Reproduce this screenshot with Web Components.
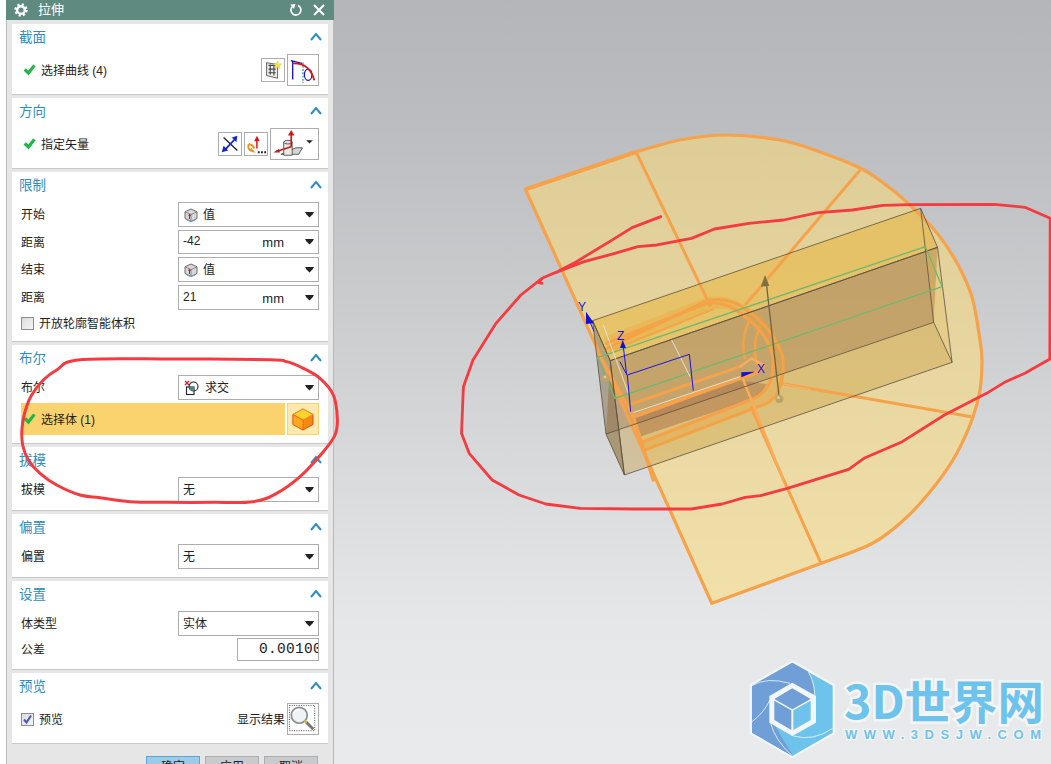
<!DOCTYPE html>
<html lang="zh"><head><meta charset="utf-8"><title>拉伸</title>
<style>
html,body{margin:0;padding:0;background:#fff}
body{font-family:"Liberation Sans","Noto Sans CJK SC",sans-serif;font-size:12px;color:#222}
</style></head><body>
<nx-app>
  <nx-dialog heading="拉伸">
    <nx-section heading="截面">
      <nx-row><nx-check-label>选择曲线 (4)</nx-check-label><nx-spacer></nx-spacer><nx-btn name="sketch" w="24" h="24"></nx-btn><nx-btn name="curve" w="32" h="32"></nx-btn></nx-row>
    </nx-section>
    <nx-section heading="方向">
      <nx-row><nx-check-label>指定矢量</nx-check-label><nx-spacer></nx-spacer><nx-btn name="reverse" w="24" h="24"></nx-btn><nx-btn name="infer" w="24" h="24"></nx-btn><nx-btn name="vector" w="49" h="32"></nx-btn></nx-row>
    </nx-section>
    <nx-section heading="限制">
      <nx-row label="开始"><nx-select icon="cube">值</nx-select></nx-row>
      <nx-row label="距离" h="24"><nx-select unit="mm" h="24">-42</nx-select></nx-row>
      <nx-row label="结束"><nx-select icon="cube">值</nx-select></nx-row>
      <nx-row label="距离"><nx-select unit="mm">21</nx-select></nx-row>
      <nx-row h="20"><nx-checkbox>开放轮廓智能体积</nx-checkbox></nx-row>
    </nx-section>
    <nx-section heading="布尔">
      <nx-row label="布尔"><nx-select icon="intersect">求交</nx-select></nx-row>
      <nx-selected-row>选择体 (1)</nx-selected-row>
    </nx-section>
    <nx-section heading="拔模">
      <nx-row label="拔模"><nx-select>无</nx-select></nx-row>
    </nx-section>
    <nx-section heading="偏置">
      <nx-row label="偏置"><nx-select>无</nx-select></nx-row>
    </nx-section>
    <nx-section heading="设置" gap="2">
      <nx-row label="体类型"><nx-select>实体</nx-select></nx-row>
      <nx-row label="公差" h="23"><nx-spacer></nx-spacer><nx-number>0.00100</nx-number></nx-row>
    </nx-section>
    <nx-section heading="预览">
      <nx-row><nx-checkbox checked>预览</nx-checkbox><nx-spacer></nx-spacer><span style="margin:0 0 2px 0">显示结果</span><nx-btn name="lens" w="32" h="32"></nx-btn></nx-row>
    </nx-section>
    <nx-button slot="footer" primary>确定</nx-button>
    <nx-button slot="footer">应用</nx-button>
    <nx-button slot="footer">取消</nx-button>
  </nx-dialog>
  <nx-viewport></nx-viewport>
  <nx-annotation slot="overlay"></nx-annotation>
</nx-app>
<script>
const ICONS={
sketch:`<svg viewBox="0 0 24 24" width="24" height="24"><path d="M5 4l12 2v15L5 18z" fill="#eee" stroke="#555"/><path d="M7 7h8M7 11h8M7 15h8M9 6v11M13 6v12" stroke="#444" stroke-width="1.2" fill="none"/><path d="M17 2l1.3 3.2 3.2.3-2.5 2 .8 3.2-2.8-1.8-2.8 1.8.8-3.2-2.5-2 3.2-.3z" fill="#f4e04d" stroke="#e8c840" stroke-width=".5"/></svg>`,
curve:`<svg viewBox="0 0 32 32" width="30" height="30"><path d="M5 6v20" stroke="#1212d8" stroke-width="1.4"/><path d="M3 6l12 3" stroke="#1212d8" stroke-width="1.4"/><path d="M16 8v22" stroke="#168a7c" stroke-width="1.2" stroke-dasharray="2 1.5"/><ellipse cx="21.5" cy="21" rx="4" ry="6" fill="none" stroke="#1212d8" stroke-width="1.3"/><path d="M5 9Q23 8 28 27" fill="none" stroke="#d81818" stroke-width="2"/></svg>`,
reverse:`<svg viewBox="0 0 24 24" width="24" height="24"><path d="M5 5l15 14" stroke="#222" stroke-width="1.5"/><path d="M6 19L18 6" stroke="#1428c8" stroke-width="2"/><path d="M20 3l-1 7-5-5zM3 21l2-7 5 5z" fill="#1428c8"/></svg>`,
infer:`<svg viewBox="0 0 24 24" width="24" height="24"><path d="M13 17V8" stroke="#d01818" stroke-width="1.6"/><path d="M13 3l3 6h-6z" fill="#d01818"/><path d="M4 12Q2 19 9 20L6 17M4 12q5 1 6 5" fill="none" stroke="#f09020" stroke-width="2"/><path d="M14 20h2v2h-2zM17.500 20h2v2h-2zM21 20h2v2h-2z" fill="#222"/></svg>`,
vector:`<svg viewBox="0 0 49 32" width="47" height="30"><path d="M10 27l16-7h7l-4 7z" fill="#d4d4d4" stroke="#333" stroke-width=".8"/><path d="M13 14h9v14h-9z" fill="#e8ebe0" stroke="#333" stroke-width=".8"/><ellipse cx="17.500" cy="14" rx="4.500" ry="2" fill="#dde" stroke="#333" stroke-width=".8"/><path d="M21 19V6" stroke="#d01818" stroke-width="1.800"/><path d="M21 1l3.500 6h-7z" fill="#d01818"/><path d="M21 19L5 24" stroke="#c02020" stroke-width="1.800"/><path d="M2 25l6-4 1 4z" fill="#c02020"/><path d="M37 12h7l-3.500 3.500z" fill="#222"/></svg>`,
lens:`<svg viewBox="0 0 32 32" width="30" height="30"><rect x="1.500" y="1.500" width="27" height="27" fill="none" stroke="#333" stroke-dasharray="1 1.500"/><circle cx="12" cy="12" r="8.500" fill="#eef3f8" stroke="#8c8c8c" stroke-width="1.800"/><path d="M6 10a6 6 0 0 1 6-4" stroke="#fff" stroke-width="2" fill="none"/><path d="M19 19l8 8" stroke="#777" stroke-width="3.200"/><path d="M17.500 17.500l2.500 2.500" stroke="#c8b858" stroke-width="2.500"/></svg>`,
cube:`<svg viewBox="0 0 14 14" width="14" height="14"><path d="M7 1l6 2.800v6.700L7 13.500 1 10.500V3.800z" fill="#d8d8d8" stroke="#6a6a6a"/><path d="M1 3.800l6 2.800 6-2.800M7 6.600v6.900" fill="none" stroke="#777" stroke-width=".8"/><path d="M3 12l4 1.500 4-1.500" stroke="#6d9bd8" fill="none" stroke-width="1.200"/><path d="M5.500 11V7" stroke="#c81818"/><path d="M5.500 5.500l1.500 2.200H4z" fill="#c81818"/></svg>`,
intersect:`<svg viewBox="0 0 16 16" width="16" height="16"><path d="M1 1l4 4M5 1L1 5" stroke="#d02030" stroke-width="1.300"/><rect x="2.500" y="7" width="7.500" height="7.500" fill="#fff" stroke="#222" stroke-width="1.100"/><circle cx="9.500" cy="6.500" r="4.500" fill="none" stroke="#222" stroke-width="1.100"/><path d="M5.200 7H10v3.800A4.500 4.500 0 0 1 5.200 7z" fill="#3a8f9a"/></svg>`,
orange:`<svg viewBox="0 0 24 24" width="24" height="24"><path d="M12 2l10 5.500v10L12 23 2 17.500v-10z" fill="#f58a10" stroke="#e04a20" stroke-width="1"/><path d="M12 2l10 5.500L12 13 2 7.500z" fill="#fdd22a" stroke="#e88a20" stroke-width=".8"/><path d="M2 7.500L12 13v10L2 17.500z" fill="#fba91a" stroke="#e04a20" stroke-width=".6"/></svg>`,
check:`<svg viewBox="0 0 13 12" width="13" height="12"><path d="M.5 6.500L3 4.200 5.300 6.600 10.200.6 12.700 2.200 5.600 11.500z" fill="#22b848"/></svg>`
};
function smooth(pts,closed){
  let d='';const n=pts.length;
  const at=i=>closed?pts[(i+n)%n]:pts[Math.max(0,Math.min(n-1,i))];
  for(let i=0;i<(closed?n:n-1);i++){
    const a=at(i-1),b=at(i),c=at(i+1),e=at(i+2);
    if(i===0)d+=`M${b[0]} ${b[1]}`;
    d+=`C${(b[0]+(c[0]-a[0])/6).toFixed(1)} ${(b[1]+(c[1]-a[1])/6).toFixed(1)} ${(c[0]-(e[0]-b[0])/6).toFixed(1)} ${(c[1]-(e[1]-b[1])/6).toFixed(1)} ${c[0]} ${c[1]}`;
  }
  return d+(closed?'Z':'');
}
function def(name,css,html){
  customElements.define(name,class extends HTMLElement{
    constructor(){super();const r=this.attachShadow({mode:'open'});
      r.innerHTML=`<style>${css}</style>`+(typeof html==='function'?html(this):html);}
  });
}
def('nx-app',`:host{display:flex;width:1051px;height:764px;overflow:hidden;position:relative;background:#fff}
::slotted(nx-annotation){position:absolute;inset:0;pointer-events:none}`,`<slot></slot><slot name="overlay"></slot>`);
def('nx-dialog',`:host{display:flex;flex-direction:column;width:328px;margin-left:6px;flex:none;height:764px;background:#e6e6e6}
.bar{height:20px;flex:none;background:#5f8a80;color:#fff;display:flex;align-items:center;padding:0 9px 2px 8px;box-sizing:border-box;font-size:13px;gap:10px}
.bar span{flex:1;padding-bottom:1px}
.body{flex:1;display:flex;flex-direction:column;border:solid #b8b8b8;border-width:0 1px;padding:4px 5px 0}
.foot{display:flex;justify-content:flex-end;gap:5px;padding:9px 10px 0 0}`,
h=>`<div class="bar"><svg width="14" height="14" viewBox="0 0 14 14" style="margin-top:2px"><circle cx="7" cy="7" r="3.800" fill="none" stroke="#fff" stroke-width="2.400"/><circle cx="7" cy="7" r="5.600" fill="none" stroke="#fff" stroke-width="2.200" stroke-dasharray="2.200 2.200"/></svg><span>${h.getAttribute('heading')}</span>
<svg width="14" height="14" viewBox="0 0 14 14" style="margin-top:2px"><path d="M9 2.500A5 5 0 1 1 4 3" fill="none" stroke="#fff" stroke-width="1.700"/><path d="M1.500 1.500L6.500 1 5 6z" fill="#fff"/></svg>
<svg width="12" height="12" viewBox="0 0 12 12" style="margin-top:2px"><path d="M1 1l10 10M11 1L1 11" stroke="#fff" stroke-width="2"/></svg></div>
<div class="body"><slot></slot><div class="foot"><slot name="footer"></slot></div></div>`);
def('nx-section',`:host{display:block;background:#fff;border-bottom:1px solid #c8c8c8;margin-bottom:3px;flex:none}
.hd{height:30px;box-sizing:border-box;padding:0 6px 4px 7px;display:flex;align-items:center;justify-content:space-between;color:#2f8cc2;font-size:13.500px}
.hd span{padding-bottom:2px}
.hd svg{margin-bottom:1px}
.bd{display:flex;flex-direction:column;padding:0 9px 8px}`,
h=>`<div class="hd"><span>${h.getAttribute('heading')}</span><svg width="12" height="9" viewBox="0 0 12 9"><path d="M1 8l5-6 5 6" fill="none" stroke="#2f8cc2" stroke-width="2"/></svg></div><div class="bd" style="gap:${h.getAttribute('gap')||3}px"><slot></slot></div>`);
def('nx-row',`:host{display:flex;align-items:center;gap:2px;min-height:25px}
.l{width:155px;flex:none;color:#222;padding-bottom:2px}`,
h=>{ if(h.getAttribute('h')) h.style.minHeight=h.getAttribute('h')+'px'; const a=h.getAttribute('label'); return (a?`<span class="l">${a}</span>`:'')+`<slot></slot>`;});
def('nx-spacer',`:host{display:block;flex:1}`,``);
def('nx-check-label',`:host{display:flex;align-items:center;gap:5px;padding:0 0 0 2px;color:#222}
span{padding-bottom:2px}`,`${ICONS.check}<span><slot></slot></span>`);
def('nx-btn',`:host{display:flex;flex:none;align-items:center;justify-content:center;box-sizing:border-box;border:1px solid #adadad;background:#fff;overflow:hidden}`,
h=>{h.style.width=h.getAttribute('w')+'px';h.style.height=h.getAttribute('h')+'px';return ICONS[h.getAttribute('name')];});
def('nx-select',`:host{display:flex;flex:none;align-items:center;box-sizing:border-box;width:141px;height:25px;border:1px solid #adadad;background:#fff;padding:0 3px 0 4px;color:#222}
.ic{display:flex;margin:0 5px 0 1px}
.t{flex:1;padding-bottom:2px}.u{font-size:13px;margin-right:21px;padding-top:1px}
svg.a{flex:none;margin-right:0}`,
h=>{ if(h.getAttribute('h')) h.style.height=h.getAttribute('h')+'px';
 const ic=h.getAttribute('icon'),u=h.getAttribute('unit');
 return (ic?`<span class="ic">${ICONS[ic]}</span>`:'')+`<span class="t"><slot></slot></span>`+(u?`<span class="u">${u}</span>`:'')+`<svg class="a" width="9" height="6" viewBox="0 0 9 6" style="margin-right:1px"><path d="M0 0h9L7.500 2.500 4.500 5.500 1.500 2.500z" fill="#222"/></svg>`;});
def('nx-checkbox',`:host{display:flex;align-items:center;gap:5px;color:#222}
.b{width:13px;height:13px;box-sizing:border-box;border:1px solid #8d8d8d;background:linear-gradient(135deg,#dcdcdc,#f5f5f5);display:flex}
.x{padding-bottom:2px}`,
h=>`<span class="b">${h.hasAttribute('checked')?'<svg width="11" height="11" viewBox="0 0 11 11"><path d="M2 5.500l2.500 3L9 1.500" fill="none" stroke="#4a5ab0" stroke-width="2"/></svg>':''}</span><span class="x"><slot></slot></span>`);
def('nx-selected-row',`:host{display:flex;gap:2px;height:32px}
.m{flex:1;background:#fbd36e;display:flex;align-items:center;gap:5px;padding-left:2px;color:#222}
.m span{padding-bottom:2px}
.b{width:32px;box-sizing:border-box;border:1px solid #fbd36e;background:#fbe9ae;display:flex;align-items:center;justify-content:center}`,
`<div class="m">${ICONS.check}<span><slot></slot></span></div><div class="b">${ICONS.orange}</div>`);
def('nx-number',`:host{display:block;box-sizing:border-box;width:82px;height:23px;border:1px solid #adadad;background:#fff;overflow:hidden;white-space:nowrap;font:14.500px/21px "Liberation Mono",monospace;letter-spacing:.3px;padding-left:21px;color:#222}`,`<slot></slot>`);
def('nx-button',`:host{display:flex;justify-content:center;box-sizing:border-box;width:54px;height:24px;padding-top:0;border:1px solid #adadad;background:#c9cace;color:#222;flex:none}
:host([primary]){background:#9bcbe6;border-color:#5da6d2}`,`<slot></slot>`);
const ARC=smooth([[636,152],[680,140],[726,135],[780,140],[820,152],[862,169],[890,188],[913,208],[937,233],[957,263],[972,297],[980,340],[982,360],[980,390],[973,417],[957,453],[937,483],[907,517],[873,543],[822,563]]);
const SHEET='M525.500 189.300L'+ARC.slice(1)+'L711.800 603.300Z';
def('nx-viewport',`:host{display:block;flex:1;background:linear-gradient(180deg,#b4b5b8 0,#bcbdc0 17%,#e6e7e8 82%,#e9eaeb 100%);position:relative}
svg{display:block;width:717px;height:764px}
.ns *{vector-effect:non-scaling-stroke}
text{font-family:"Liberation Sans","Noto Sans CJK SC",sans-serif}`,
`<svg viewBox="334 0 717 764">
<path d="${SHEET}" fill="rgba(255,220,110,.5)"/>
<g class="ns" transform="translate(450 130) scale(.38329 .33333)" stroke-linejoin="round" fill="none">
  <path d="M372 572L1228 235L1272 352L418 692Z" fill="rgba(232,180,60,.55)"/>
  <path d="M418 692L1272 352L1262 577L407 912Z" fill="rgba(172,130,72,.6)"/>
  <path d="M407 912L1262 577L1310 697L455 1035Z" fill="rgba(200,160,70,.42)"/>
  <path d="M372 572L418 692L455 1035L407 912Z" fill="rgba(130,110,80,.5)"/>
  <path d="M1228 235L1272 352L1310 697L1262 577Z" fill="rgba(230,190,90,.3)"/>
</g>
<path d="${SHEET}" fill="none" stroke="#f5a24a" stroke-width="3.200" stroke-linejoin="round"/>
<path d="M525.500 189.300L636 152" fill="none" stroke="#f5a24a" stroke-width="4"/>
<g class="ns" transform="translate(450 130) scale(.38329 .33333)" stroke-linejoin="round" fill="none">
  <path d="M485 65L680 530M1070 120L770 525M860 760L1360 860M785 830L968 1300" stroke="#f5a24a" stroke-width="3"/>
</g>
<g class="ns" transform="translate(570 260) scale(.33333)" stroke-linejoin="round" stroke-linecap="round" fill="none">
  <path d="M100 232L410 112Q480 100 540 145Q625 205 645 295Q650 350 625 400L590 432L220 574L208 545L540 418Q590 390 606 330Q612 250 540 185Q480 135 425 150L120 280Z" fill="rgba(240,160,50,.3)"/>
  <path d="M190 472L510 362L590 372L565 412L205 532Z" fill="rgba(170,110,70,.5)"/>
  <path d="M85 280L190 470L250 660" stroke="#f5a24a" stroke-width="3.500"/>
  <path d="M105 268L405 125Q470 105 530 150Q610 205 638 290Q645 345 625 395Q610 420 590 430L220 572" stroke="#f3a344" stroke-width="3"/>
  <path d="M110 250L410 130Q470 120 525 170Q600 225 610 300Q612 350 590 385Q570 410 540 420L212 548" stroke="#f5a24a" stroke-width="3.200"/>
  <path d="M120 272L430 148" stroke="#f0a848" stroke-width="2.200"/>
  <path d="M525 295Q510 240 540 175M560 310Q545 250 570 200" stroke="#f3a344" stroke-width="2.500"/>
  <path d="M185 432L510 320" stroke="#f5a24a" stroke-width="3"/>
  <path d="M192 470L515 352Q560 345 580 320" stroke="#f5a24a" stroke-width="4"/>
  <path d="M510 320L545 295L580 315M520 360L640 660" stroke="#f8ad5a" stroke-width="2.500"/>
  <path d="M640 372L720 388" stroke="#f8b060" stroke-width="1.500"/>
</g>
<g class="ns" transform="translate(450 130) scale(.38329 .33333)" fill="none">
  <path d="M372 572L1228 235L1272 352L418 692ZM418 692L1272 352L1310 697L455 1035ZM372 572L407 912L455 1035L418 692ZM407 912L1262 577L1310 697M1228 235L1262 577" stroke="#5c5040" stroke-width=".8"/>
  <path d="M385 683L1240 350L1284 470L430 805Z" stroke="#6fb86f" stroke-width="1.300"/>
</g>
<g class="ns" transform="translate(570 260) scale(.33333)" fill="none">
  <path d="M100 195L175 400M190 458L510 350M305 240L360 350" stroke="#e8e4e0" stroke-width=".9"/>
  <path d="M172 345L358 283L370 392M172 345L182 455M160 260L170 345M150 305L168 340M62 190L72 215" stroke="#1616e8" stroke-width="1"/>
  <path d="M48 155L72 190L48 192ZM158 240L168 264L150 264ZM555 335L514 352L514 337Z" fill="#1212d8"/>
  <path d="M628 417L590 78" stroke="#6e6440" stroke-width="1.300"/>
  <path d="M585 45L598 78L573 80Z" fill="#7d7045"/>
  <circle cx="628" cy="417" r="12" fill="#bca468"/><circle cx="108" cy="355" r="12" fill="#bca468"/>
  <circle cx="625" cy="413" r="4" fill="#e0d0a0"/><circle cx="105" cy="351" r="4" fill="#e0d0a0"/>
</g>
<text x="578" y="311" font-size="12" fill="#1414e0">Y</text>
<text x="617" y="340" font-size="12" fill="#1414e0">Z</text>
<text x="757" y="373" font-size="12" fill="#1414e0">X</text>
<g transform="translate(740 650) scale(.33333)">
  <path d="M157 30L285 103V252L157 325L29 252V103Z" fill="#f4f5f6"/>
  <path d="M157 38L278 107V248L157 318L36 248V107Z" fill="#6ec3ec"/>
  <path d="M157 38L205 65Q225 100 222 150L157 105L97 145L100 215Q120 255 160 318L157 318L36 248V107Z" fill="#6f9fd6"/>
  <path d="M205 65Q232 110 222 175M36 107Q80 80 150 100M90 150Q70 190 36 215M92 220Q105 270 157 318M160 258Q220 275 278 235" fill="none" stroke="#eef4f8" stroke-width="2.500"/>
  <path d="M157 98L228 138V218L157 258L88 218V138Z" fill="#f4f7f9"/>
  <path d="M157 115L212 147L157 178L103 147Z" fill="#6f9fd6"/>
  <path d="M103 152L154 181V240L103 210Z" fill="#6f9fd6"/>
  <path d="M160 181L212 152V210L160 240Z" fill="#6ec3ec"/>
</g>
<text x="844" y="719" font-size="46" font-weight="700" fill="#6ec3ec" stroke="#f4f5f6" stroke-width="5" paint-order="stroke" style="font-family:'Noto Sans CJK SC','Liberation Sans',sans-serif" textLength="200" lengthAdjust="spacingAndGlyphs">3D世界网</text>
<text x="845" y="739" font-size="13" font-weight="700" fill="#6ec3ec" stroke="#f4f5f6" stroke-width="2.500" paint-order="stroke" textLength="196">WWW.3DSJW.COM</text>
</svg>`);
const LOOP1=smooth([[240,44],[170,75],[130,105],[95,150],[75,200],[66,250],[68,300],[85,345],[120,385],[170,420],[240,450],[300,458],[390,470],[500,472],[640,472],[760,470],[830,445],[900,395],[970,320],[1005,270],[1012,220],[1000,150],[960,100],[910,70],[860,50],[810,44],[520,42]],true);
def('nx-annotation',`:host{display:block}svg{position:absolute;left:0;top:0;width:1051px;height:764px}path{vector-effect:non-scaling-stroke}`,
`<svg viewBox="0 0 1051 764" fill="none" stroke="#f43b40" stroke-linejoin="round" stroke-linecap="round">
<path transform="translate(0 345) scale(.33333)" stroke-width="3" d="${LOOP1}"/>
<path transform="translate(450 130) scale(.38329 .33333)" stroke-width="2.800" d="M550 260L475 293L430 325L330 395L280 425L240 445L232 458L240 460M240 445L185 495L120 580L60 690L35 770L30 910L50 970L110 1050L180 1095L250 1122L340 1135L480 1137L630 1137L710 1122L770 1102L810 1097L880 1075L1040 1018L1080 985L1180 935L1290 855L1400 790L1450 755L1500 730L1565 687L1566 265L1500 232L1420 223L1200 224L1130 226L1050 240L960 248L870 270L780 280L690 297L630 325L540 345L490 350L430 370L350 395L270 430L240 445"/>
</svg>`);
</script>
</body></html>
